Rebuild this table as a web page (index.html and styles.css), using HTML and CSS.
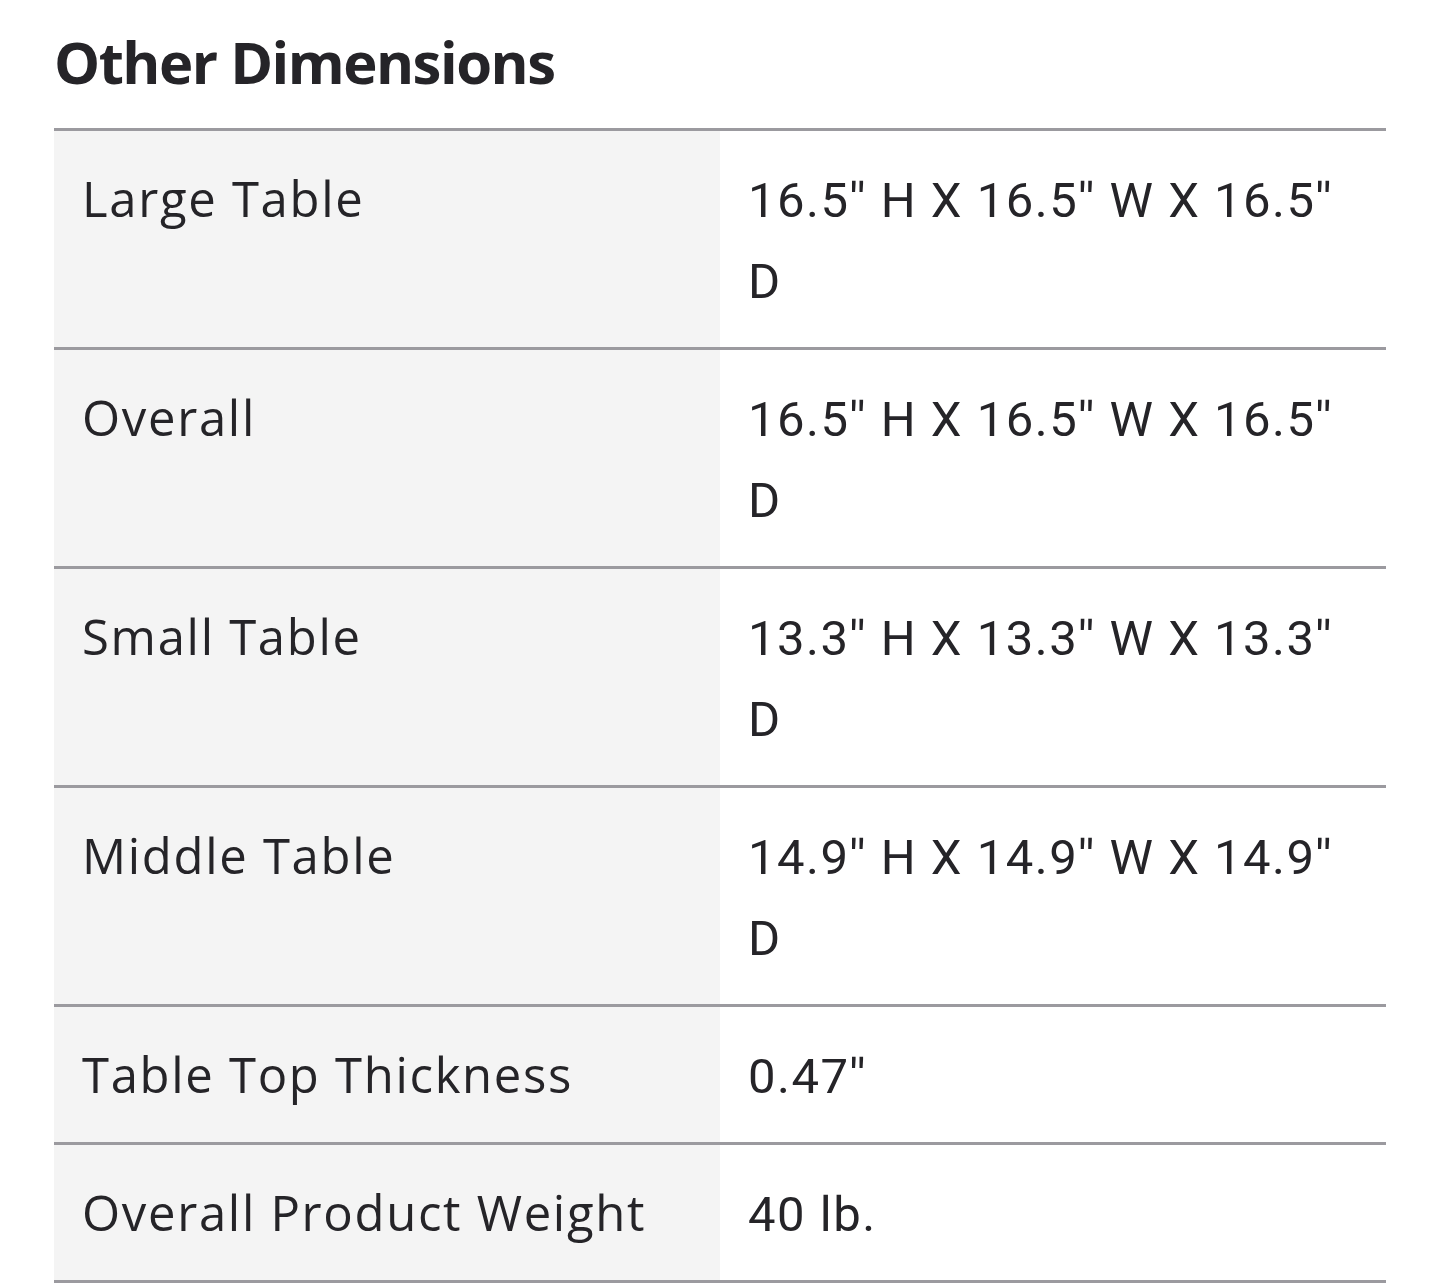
FILE: index.html
```html
<!DOCTYPE html>
<html lang="en">
<head>
<meta charset="utf-8">
<title>Other Dimensions</title>
<link rel="stylesheet" href="styles.css">
</head>
<body>
<section class="specs">
  <h2 class="specs-title">Other Dimensions</h2>
  <table class="specs-table">
    <tbody>
      <tr><th class="label">Large Table</th><td class="value">16.5'' H X 16.5'' W X 16.5'' D</td></tr>
      <tr><th class="label">Overall</th><td class="value">16.5'' H X 16.5'' W X 16.5'' D</td></tr>
      <tr><th class="label">Small Table</th><td class="value">13.3'' H X 13.3'' W X 13.3'' D</td></tr>
      <tr><th class="label">Middle Table</th><td class="value">14.9'' H X 14.9'' W X 14.9'' D</td></tr>
      <tr><th class="label">Table Top Thickness</th><td class="value">0.47''</td></tr>
      <tr><th class="label">Overall Product Weight</th><td class="value">40 lb.</td></tr>
    </tbody>
  </table>
</section>
</body>
</html>
```

FILE: styles.css
```css
html, body {
  margin: 0;
  padding: 0;
  background: #ffffff;
}
body {
  font-family: "Open Sans", "Noto Sans", sans-serif;
  color: #252428;
}
.specs {
  padding: 0 54px;
}
.specs-title {
  margin: 0;
  padding-top: 24px;
  height: 128px;
  box-sizing: border-box;
  font-size: 58px;
  font-weight: 700;
  line-height: 76px;
  letter-spacing: -1.5px;
}
.specs-table {
  width: 100%;
  border-collapse: collapse;
  table-layout: fixed;
}
.specs-table tr {
  border-top: 3px solid #9b9a9f;
}
.specs-table tr:last-child {
  border-bottom: 3px solid #9b9a9f;
}
.label, .value {
  box-sizing: border-box;
  width: 50%;
  text-align: left;
  vertical-align: top;
  padding: 27px 28px;
  font-size: 49px;
  line-height: 81px;
  font-weight: 400;
}
.label {
  background: #f4f4f4;
  letter-spacing: 1.7px;
}
.value {
  background: #ffffff;
  font-family: "Roboto", "Open Sans", sans-serif;
  letter-spacing: 1.5px;
  padding-top: 29px;
  padding-bottom: 25px;
  padding-right: 48px;
}
```
